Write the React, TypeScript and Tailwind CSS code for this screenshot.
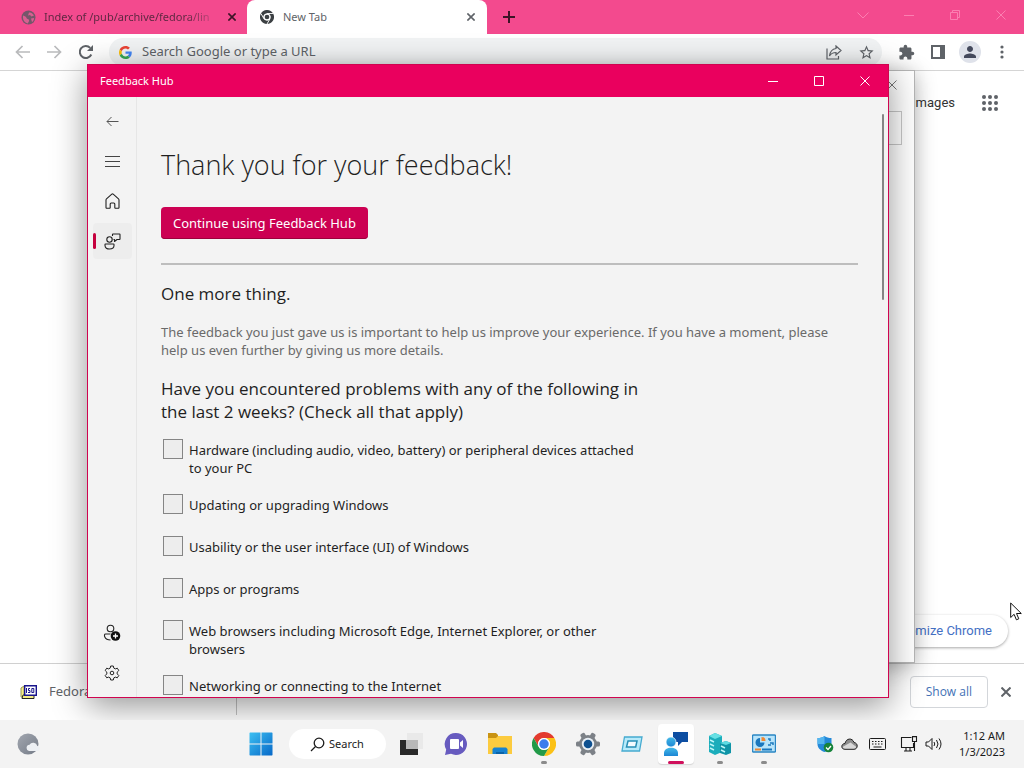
import type { ReactNode } from "react";
import { MdExtension, MdPerson, MdStarBorder } from "react-icons/md";

const problems = [
  "Hardware (including audio, video, battery) or peripheral devices attached to your PC",
  "Updating or upgrading Windows",
  "Usability or the user interface (UI) of Windows",
  "Apps or programs",
  "Web browsers including Microsoft Edge, Internet Explorer, or other browsers",
  "Networking or connecting to the Internet",
];

function Cross({ size = 10, width = 1 }: { size?: number; width?: number }) {
  return (
    <svg width={size} height={size} viewBox="0 0 10 10" fill="none" stroke="currentColor" strokeWidth={width}>
      <path d="M.5.5l9 9M9.5.5l-9 9" />
    </svg>
  );
}

function ChromeMark({ mono = false, size }: { mono?: boolean; size: number }) {
  const c = mono ? ["#3c4043", "#3c4043", "#3c4043"] : ["#e33b2e", "#fbc116", "#229a48"];
  return (
    <svg width={size} height={size} viewBox="0 0 48 48">
      <path fill={c[0]} d="M24 12h20.8A24 24 0 0 0 3.2 12l10.4 18A12 12 0 0 1 24 12z" />
      <path fill={c[1]} d="M34.4 30L24 48a24 24 0 0 0 20.8-36H24a12 12 0 0 1 10.4 18z" />
      <path fill={c[2]} d="M13.6 30L3.2 12A24 24 0 0 0 24 48l10.4-18a12 12 0 0 1-20.8 0z" />
      {mono && (
        <path d="M24 12h21M13.6 30L3.2 12M34.4 30L24 48" stroke="#fff" strokeWidth="3" />
      )}
      <circle cx="24" cy="24" r="12" fill="#fff" />
      <circle cx="24" cy="24" r={mono ? 8 : 9.5} fill={mono ? "#3c4043" : "#3b7ded"} />
    </svg>
  );
}

function GoogleG() {
  return (
    <svg width="13" height="13" viewBox="0 0 48 48">
      <path fill="#EA4335" d="M24 9.5c3.54 0 6.71 1.22 9.21 3.6l6.85-6.85C35.9 2.38 30.47 0 24 0 14.62 0 6.51 5.38 2.56 13.22l7.98 6.19C12.43 13.72 17.74 9.5 24 9.5z" />
      <path fill="#4285F4" d="M46.98 24.55c0-1.57-.15-3.09-.38-4.55H24v9.02h12.94c-.58 2.96-2.26 5.48-4.78 7.18l7.73 6c4.51-4.18 7.09-10.36 7.09-17.65z" />
      <path fill="#FBBC05" d="M10.53 28.59A14.5 14.5 0 0 1 9.77 24c0-1.6.27-3.14.76-4.59l-7.98-6.19A23.9 23.9 0 0 0 0 24c0 3.88.92 7.54 2.56 10.78l7.97-6.19z" />
      <path fill="#34A853" d="M24 48c6.48 0 11.93-2.13 15.89-5.81l-7.73-6c-2.15 1.45-4.92 2.3-8.16 2.3-6.26 0-11.57-4.22-13.47-9.91l-7.98 6.19C6.51 42.62 14.62 48 24 48z" />
    </svg>
  );
}

function TabStrip() {
  const caption = "flex h-[30px] w-[46px] items-center justify-center";
  return (
    <div className="flex h-[34px] shrink-0 bg-[#f34a8e]">
      <div className="flex w-[247px] items-center pl-[21px] pr-[5px] text-[#5b2740]">
        <svg width="15" height="15" viewBox="0 0 15 15">
          <circle cx="7.500" cy="7.500" r="7" fill="#75566a" />
          <path d="M2 5.500C4 6 5 6.500 5.500 8s2 .5 2.500 2-1 2-1 3.500C4 13 2 10.500 2 8zM8 2.500c2-.5 4 1 5 3L10.500 6.500 9 5 7 5.500zM10 8.500l3-.5c0 2-1 3.500-2 4z" fill="#d85f91" />
        </svg>
        <span className="ml-2 whitespace-nowrap bg-linear-to-r from-[#5b2740] from-85% to-[#c04478] bg-clip-text text-[11px] text-transparent">
          Index of /pub/archive/fedora/lin
        </span>
        <button aria-label="Close tab" className="ml-auto flex size-5 items-center justify-center text-[#3c1426]">
          <Cross size={8} width={2} />
        </button>
      </div>
      <div className="flex w-[240px] items-center rounded-t-lg bg-white pl-[13px] pr-[6px] text-[#5f6368]">
        <ChromeMark mono size={14} />
        <span className="ml-[9px] text-[11px]">New Tab</span>
        <button aria-label="Close tab" className="ml-auto flex size-5 items-center justify-center">
          <Cross size={8} width={2} />
        </button>
      </div>
      <button aria-label="New tab" className="flex w-[44px] items-center justify-center text-[#3c1426]">
        <svg width="12" height="12" viewBox="0 0 12 12" stroke="currentColor" strokeWidth="2">
          <path d="M6 0v12M0 6h12" />
        </svg>
      </button>
      <div className="ml-auto flex text-[#fb7fb1]">
        <button aria-label="Search tabs" className={caption}>
          <svg width="12" height="7" viewBox="0 0 12 7" fill="none" stroke="currentColor"><path d="M.5.5L6 6l5.500-5.500" /></svg>
        </button>
        <button aria-label="Minimize browser" className={caption}>
          <svg width="10" height="1" viewBox="0 0 10 1"><path d="M0 0h10v1H0z" fill="currentColor" /></svg>
        </button>
        <button aria-label="Restore browser" className={caption}>
          <svg width="10" height="10" viewBox="0 0 10 10" fill="none" stroke="currentColor"><path d="M.5 2.500h7v7h-7zM2.500 2.500v-2h7v7h-2" /></svg>
        </button>
        <button aria-label="Close browser" className={caption}><Cross /></button>
      </div>
    </div>
  );
}

function Toolbar() {
  const slot = "flex h-7 w-8 shrink-0 items-center justify-center";
  return (
    <div className="flex h-[37px] shrink-0 items-center border-b border-[#d5d5d5] bg-white px-[6px] text-[#5f6368]">
      <button aria-label="Back" className={slot + " text-[#b9babc]"}>
        <svg width="15" height="14" viewBox="0 0 15 14" fill="none" stroke="currentColor" strokeWidth="1.700"><path d="M15 7H1.500M7.500 1l-6 6 6 6" /></svg>
      </button>
      <button aria-label="Forward" className={slot + " text-[#b9babc]"}>
        <svg width="15" height="14" viewBox="0 0 15 14" fill="none" stroke="currentColor" strokeWidth="1.700"><path d="M0 7h13.500M7.500 1l6 6-6 6" /></svg>
      </button>
      <button aria-label="Reload" className={slot}>
        <svg width="14" height="14" viewBox="0 0 14 14"><path d="M12.300 9.500A6 6 0 1 1 11.200 2.900" fill="none" stroke="currentColor" strokeWidth="2" /><path d="M14 0v6H8z" fill="currentColor" /></svg>
      </button>
      <div className="ml-[7px] flex h-7 flex-1 items-center rounded-full bg-[#f1f3f4] pl-[10px]">
        <GoogleG />
        <input
          aria-label="Address bar"
          placeholder="Search Google or type a URL"
          className="ml-[10px] min-w-0 flex-1 bg-transparent text-[13px] outline-none placeholder:text-[#5f6368]"
        />
        <button aria-label="Share" className={slot}>
          <svg width="16" height="15" viewBox="0 0 16 15" fill="none" stroke="currentColor" strokeWidth="1.200"><path d="M1 3.500v10.500h11.500v-3M10 1l5 4.500-5 4.500V7.500C7 7.500 5 8.500 3.500 11 4 7 6 4 10 3.500z" /></svg>
        </button>
        <button aria-label="Bookmark" className={slot}><MdStarBorder size={17} /></button>
      </div>
      <button aria-label="Extensions" className={slot + " ml-[8px]"}><MdExtension size={17} /></button>
      <button aria-label="Side panel" className={slot}>
        <svg width="14" height="14" viewBox="0 0 14 14"><path d="M1 1h12v12H1z" fill="none" stroke="currentColor" strokeWidth="2" /><path d="M9 0h5v14H9z" fill="currentColor" /></svg>
      </button>
      <button aria-label="Profile" className={slot}>
        <span className="flex size-[22px] items-center justify-center rounded-full bg-[#dfe2ea] text-[#44495c]"><MdPerson size={18} /></span>
      </button>
      <button aria-label="Menu" className={slot}>
        <svg width="4" height="14" viewBox="0 0 4 14" fill="currentColor"><circle cx="2" cy="2" r="1.600" /><circle cx="2" cy="7" r="1.600" /><circle cx="2" cy="12" r="1.600" /></svg>
      </button>
    </div>
  );
}

function NewTabPage() {
  return (
    <div className="relative flex flex-1 justify-end bg-white font-[Roboto,'Liberation_Sans',sans-serif] text-[13px]">
      <div className="mr-[25px] mt-4 flex h-8 items-center gap-[26px] text-[#333]">
        <a href="#images">Images</a>
        <button aria-label="Google apps">
          <svg width="18" height="18" viewBox="0 0 18 18" fill="#5f6368">
            {[3, 9, 15].map((y) => [3, 9, 15].map((x) => <circle key={x * 20 + y} cx={x} cy={y} r="2" />))}
          </svg>
        </button>
      </div>
      <button className="absolute bottom-4 right-4 h-8 rounded-full bg-white px-4 text-[#4470c4] shadow-[0_1px_3px_rgba(0,0,0,0.35)]">
        Customize Chrome
      </button>
    </div>
  );
}

function Downloads() {
  return (
    <div className="flex h-[57px] shrink-0 items-center border-t border-[#d0d0d0] bg-white text-[12px] text-[#5f6368]">
      <div className="flex h-[46px] w-[237px] items-center border-r border-[#c4c4c4] pl-5">
        <svg width="17" height="16" viewBox="0 0 17 16">
          <path d="M1 4l3-2v11H1z" fill="#f5ed86" stroke="#98945a" />
          <path d="M2 14.500h12V11H3z" fill="#f5ed86" stroke="#222" />
          <path d="M4.700 1.700h11.600v9.600H4.700z" fill="#fff" stroke="#19158c" strokeWidth="1.400" />
          <path d="M6.500 4v5M10 4.500H8.500v2H10v2H8M11.800 4.500h2v4h-2z" fill="none" stroke="#19158c" />
        </svg>
        <span className="ml-3 text-[13px]">Fedora</span>
      </div>
      <button className="ml-auto h-8 rounded border border-[#d3d6da] px-[15px] font-['Open_Sans',sans-serif] text-[12px] font-medium text-[#4371b5]">Show all</button>
      <button aria-label="Close downloads" className="flex w-9 justify-center"><Cross size={10} width={2} /></button>
    </div>
  );
}

function NavButton({ label, active, children }: { label: string; active?: boolean; children: ReactNode }) {
  return (
    <button
      aria-label={label}
      className={"relative flex h-9 w-[39px] items-center justify-center rounded-sm text-[#222] " + (active ? "bg-[#ededed]" : "")}
    >
      {active && <span className="absolute left-0 h-4 w-[3px] rounded-full bg-[#c5003e]" />}
      {children}
    </button>
  );
}

function Sidebar() {
  return (
    <nav className="flex w-[49px] shrink-0 flex-col items-center gap-1 border-r border-[#e6e6e6] pb-[6px] pt-[6px]">
      <NavButton label="Back">
        <svg width="13" height="11" viewBox="0 0 13 11" fill="none" stroke="#555"><path d="M12.500 5.500H1M5.500 1L1 5.500 5.500 10" /></svg>
      </NavButton>
      <NavButton label="Navigation">
        <svg width="15" height="11" viewBox="0 0 15 11" stroke="#444"><path d="M0 .5h15M0 5.500h15M0 10.500h15" /></svg>
      </NavButton>
      <NavButton label="Home">
        <svg width="15" height="16" viewBox="0 0 15 16" fill="none" stroke="currentColor" strokeWidth="1.100" strokeLinejoin="round"><path d="M1 7Q1 6.300 1.500 5.800L6.800 1.200Q7.500.6 8.200 1.200L13.500 5.800Q14 6.300 14 7v7.500a.7.7 0 0 1-.7.7H10.500a.7.7 0 0 1-.7-.7V11a1 1 0 0 0-1-1H6.200a1 1 0 0 0-1 1v3.500a.7.7 0 0 1-.7.7H1.700a.7.7 0 0 1-.7-.7z" /></svg>
      </NavButton>
      <NavButton label="Feedback" active>
        <svg width="17" height="17" viewBox="0 0 17 17" fill="none" stroke="currentColor" strokeWidth="1.100" strokeLinejoin="round">
          <path d="M8.500 3V1.500Q8.500 1 9 1h6.500q.5 0 .5.500v4.500q0 .5-.5.500H13l-2.500 2V6.500H9.500" /><circle cx="5.500" cy="6.500" r="2.700" /><path d="M1.500 11h8q.5 0 .5.500v1c0 2.500-2 3.500-4.500 3.500S1 15 1 12.500v-1q0-.5.5-.5z" />
        </svg>
      </NavButton>
      <div className="flex-1" />
      <NavButton label="Add account">
        <svg width="18" height="18" viewBox="0 0 18 18" fill="none" stroke="currentColor" strokeWidth="1.100">
          <circle cx="7.500" cy="4.500" r="3.300" /><path d="M7.500 10H2.500c-2 0-1.500 6 5 6" /><circle cx="12.500" cy="12" r="4.800" fill="#111" stroke="none" /><path d="M12.500 9.500v5M10 12h5" stroke="#fff" strokeWidth="1.300" />
        </svg>
      </NavButton>
      <NavButton label="Settings">
        <svg width="16" height="16" viewBox="0 0 16 16" fill="none" stroke="currentColor" strokeLinejoin="round">
          <path d="M6.700 1h2.600l.5 2.100 1.500.8 2-.7 1.500 2.300-1.600 1.600v1.800l1.600 1.600-1.500 2.300-2-.7-1.500.8-.5 2.100H6.700l-.5-2.100-1.500-.8-2 .7-1.500-2.300 1.600-1.600V7.100L1.200 5.500l1.500-2.300 2 .7 1.500-.8z" /><circle cx="8" cy="8" r="1.800" />
        </svg>
      </NavButton>
    </nav>
  );
}

function FeedbackHub() {
  const caption = "flex h-8 w-[46px] items-center justify-center";
  return (
    <section className="absolute bottom-[70px] left-[87px] right-[135px] top-16 flex flex-col border border-[#d0044f] bg-[#f3f3f3] text-[#1f1f1f] shadow-[0_8px_32px_rgba(0,0,0,0.42)]">
      <header className="flex h-8 shrink-0 items-center bg-[#ea005e] pl-3 text-[11px] text-white">
        Feedback Hub
        <div className="ml-auto flex">
          <button aria-label="Minimize" className={caption}>
            <svg width="10" height="1" viewBox="0 0 10 1"><path d="M0 0h10v1H0z" fill="currentColor" /></svg>
          </button>
          <button aria-label="Maximize" className={caption}>
            <svg width="10" height="10" viewBox="0 0 10 10" fill="none" stroke="currentColor"><path d="M.5.5h9v9h-9z" /></svg>
          </button>
          <button aria-label="Close" className={caption}><Cross /></button>
        </div>
      </header>
      <div className="flex min-h-0 flex-1">
        <Sidebar />
        <main className="min-w-0 flex-1 overflow-hidden pl-6 text-[13px] leading-[18px]">
          <h1 className="mt-12 font-['Open_Sans',sans-serif] text-[27px] font-light leading-10">Thank you for your feedback!</h1>
          <button className="mt-[22px] h-8 rounded bg-[#cc0052] px-3 text-white shadow-[inset_0_-1px_0_#9c003c]">
            Continue using Feedback Hub
          </button>
          <hr className="mt-6 border-t-2 border-[#bdbdbd]" />
          <h2 className="mt-4 font-['Open_Sans',sans-serif] text-[17px] leading-[26px]">One more thing.</h2>
          <p className="mt-4 text-[#6a6a6a]">
            The feedback you just gave us is important to help us improve your experience. If you have a moment, please help us even further by giving us more details.
          </p>
          <fieldset className="mt-[18px]">
            <legend className="max-w-[500px] font-['Open_Sans',sans-serif] text-[17px] leading-[23px]">
              Have you encountered problems with any of the following in the last 2 weeks? (Check all that apply)
            </legend>
            <div className="mt-4 flex max-w-[482px] flex-col gap-[15px] pl-[2px]">
              {problems.map((p) => (
                <label key={p} className="flex min-h-[27px] items-start gap-[6px]">
                  <input type="checkbox" className="size-5 shrink-0 appearance-none border border-[#858585] bg-[#ededed] checked:bg-[#cc0052]" />
                  <span className="pb-[2px] pt-[2px]">{p}</span>
                </label>
              ))}
            </div>
          </fieldset>
        </main>
        <div className="flex w-[30px] shrink-0 justify-end pr-1 pt-[17px]">
          <div className="h-[186px] w-[2px] rounded-full bg-[#858585]" />
        </div>
      </div>
    </section>
  );
}

function DialogBehind() {
  return (
    <section className="absolute bottom-[105px] left-[140px] right-[109px] top-[70px] border border-[#b5b5b5] bg-white shadow-[0_4px_20px_rgba(0,0,0,0.3)]">
      <div className="flex h-7 items-center justify-end pr-[17px] text-[#777]">
        <button aria-label="Close dialog"><Cross /></button>
      </div>
      <div className="mr-3 mt-3 h-[34px] border border-[#c8c8c8]" />
    </section>
  );
}

function WindowsIcon() {
  return (
    <svg width="24" height="24" viewBox="0 0 24 24">
      <defs><linearGradient id="win" x1="0" y1="0" x2="1" y2="1"><stop stopColor="#3cc0f2" /><stop offset="1" stopColor="#0768c8" /></linearGradient></defs>
      <path fill="url(#win)" d="M1 .5h10.500V11.500H.5V1zM12.500.5H23l.5.5v10.500h-11zM.5 12.500h11v11H1l-.5-.5zM12.500 12.500h11V23l-.5.5H12.500z" />
    </svg>
  );
}

function TaskButton({ label, state, children }: { label: string; state?: "open" | "active"; children: ReactNode }) {
  return (
    <button aria-label={label} className="flex h-12 w-11 items-center justify-center">
      <span className={"relative flex h-10 w-9 items-center justify-center rounded " + (state === "active" ? "bg-white shadow-[0_1px_1px_rgba(0,0,0,0.12)]" : "")}>
        {children}
        {state === "active" && <span className="absolute bottom-0 h-[3px] w-4 rounded-full bg-[#d0105c]" />}
        {state === "open" && <span className="absolute bottom-0 h-[3px] w-[6px] rounded-full bg-[#8b8b8b]" />}
      </span>
    </button>
  );
}

function Taskbar() {
  return (
    <footer className="relative z-10 grid h-12 shrink-0 grid-cols-[1fr_auto_1fr] items-center bg-[#f3f3f3] text-[12px] text-[#1b1b1b]">
      <button aria-label="Weather" className="ml-4 w-6">
        <svg width="24" height="24" viewBox="0 0 24 24">
          <defs><linearGradient id="moon" x1="0" y1="0" x2="1" y2="1"><stop stopColor="#a2a7b0" /><stop offset="1" stopColor="#747b87" /></linearGradient></defs>
          <circle cx="12" cy="12" r="10.500" fill="url(#moon)" />
          <path d="M13 19a3.200 3.200 0 0 1 .5-6.300 4.300 4.300 0 0 1 7.800 1.300c3.500 0 3.500 5 0 5z" fill="#eceff3" />
        </svg>
      </button>
      <div className="flex items-center">
        <TaskButton label="Start"><WindowsIcon /></TaskButton>
        <button className="ml-[6px] mr-1 flex h-[30px] w-[97px] items-center justify-center gap-1 rounded-full bg-white text-[11px]">
          <svg width="15" height="15" viewBox="0 0 15 15" fill="none" stroke="currentColor" strokeWidth="1.300"><circle cx="9" cy="6" r="4.800" /><path d="M5.500 9.500L1 14" /></svg>
          Search
        </button>
        <TaskButton label="Task view">
          <svg width="24" height="24" viewBox="0 0 24 24"><path fill="#e9e9e9" d="M7 1h16v16H7z" /><path fill="#292929" d="M0 8h18v15H0z" /><path fill="#b8b8b8" d="M6 8h12v9H6z" /></svg>
        </TaskButton>
        <TaskButton label="Chat">
          <svg width="24" height="24" viewBox="0 0 24 24"><path d="M12 1a11 11 0 1 1-5 20.800L1 23l1.200-5.500A11 11 0 0 1 12 1z" fill="#675bbf" /><rect x="6" y="7" width="9" height="10" rx="1" fill="#fff" /><path d="M16 10.500L19 8v8l-3-2.500z" fill="#fff" /></svg>
        </TaskButton>
        <TaskButton label="File Explorer">
          <svg width="24" height="24" viewBox="0 0 24 24"><path d="M0 1h8l2 2v5H0z" fill="#c99313" /><path d="M0 6h8l2-2h14v18H0z" fill="#fccb3f" /><path d="M4.500 22v-5l1.500-1.500h12L19.500 17v5z" fill="#1782d0" /><path d="M8 20h8v2H8z" fill="#0b63a8" /></svg>
        </TaskButton>
        <TaskButton label="Google Chrome" state="open"><ChromeMark size={24} /></TaskButton>
        <TaskButton label="Settings app">
          <svg width="24" height="24" viewBox="0 0 24 24">
            <g fill="#7c8187"><circle cx="12" cy="12" r="9" />
              {[0, 60, 120].map((a) => <rect key={a} x="9.500" y="0" width="5" height="24" rx="1.500" transform={`rotate(${a + 30} 12 12)`} />)}
            </g>
            <circle cx="12" cy="12" r="6.200" fill="#e8eef4" /><circle cx="12" cy="12" r="4.300" fill="#0d5090" />
          </svg>
        </TaskButton>
        <TaskButton label="Run">
          <svg width="22" height="16" viewBox="0 0 22 16" fill="none"><path d="M3.500 1h17.500l-2.500 14H1z" fill="#b7eafa" stroke="#45abd0" strokeWidth="1.300" /><path d="M7 5h9l-1.300 6H5.500z" fill="#f3fbff" stroke="#278fb6" strokeWidth="1.500" /></svg>
        </TaskButton>
        <TaskButton label="Feedback Hub" state="active">
          <svg width="24" height="26" viewBox="0 0 24 26">
            <defs><linearGradient id="person" x1="0" y1="0" x2="0" y2="1"><stop stopColor="#43b9e8" /><stop offset="1" stopColor="#1c86d4" /></linearGradient></defs>
            <path d="M9 1h15v10h-6l-4 4v-4H9z" fill="#0d4ea2" /><circle cx="7" cy="11" r="5" fill="url(#person)" stroke="#fff" strokeWidth=".7" /><path d="M0 25v-3c0-7 14-7 14 0v3z" fill="url(#person)" />
          </svg>
        </TaskButton>
        <TaskButton label="Registry" state="open">
          <svg width="24" height="24" viewBox="0 0 24 24">
            <path d="M1 4l6-3 7 3v16l-7 3-6-3z" fill="#1badbb" /><path d="M1 4l6-3 7 3-7 3z" fill="#67e0e4" /><path d="M12 11l6-2 5 2v10l-5 2-6-2z" fill="#0f94a7" /><path d="M12 11l6-2 5 2-5 2z" fill="#5edce3" /><path d="M2 8l4 2M2 12l4 2M2 16l4 2M13 14l4 2M13 18l4 2" stroke="#bdf6f8" strokeWidth="1.500" />
          </svg>
        </TaskButton>
        <TaskButton label="Control Panel" state="open">
          <svg width="24" height="20" viewBox="0 0 24 20"><rect x=".5" y="1" width="23" height="17" rx="1" fill="#b8e4fa" stroke="#2a86c4" strokeWidth="1.400" /><path d="M8 4a4.500 4.500 0 1 0 4.500 4.500H8z" fill="#1a77bd" /><path d="M9.500 3v4h4a4 4 0 0 0-4-4z" fill="#ef8732" /><path d="M16 5h2v2M18 9h3v2M16 11h3" stroke="#1e7abf" strokeWidth="1.500" fill="none" /><path d="M3 15.500h6" stroke="#ef8732" strokeWidth="2" /><path d="M10 15.500h10" stroke="#1a77bd" strokeWidth="2" /></svg>
        </TaskButton>
      </div>
      <div className="flex items-center justify-end pr-[19px]">
        <div className="flex items-center">
          <svg width="17" height="17" viewBox="0 0 17 17"><path d="M7.500 0c2 1.500 4 2 7 2v6c0 4-3 6.500-7 8C3.500 14.500.5 12 .5 8V2c3 0 5-.5 7-2z" fill="#2489d8" /><path d="M7.500 0v8h-7V2c3 0 5-.5 7-2z" fill="#54b6ef" /><circle cx="11.500" cy="11.500" r="4.800" fill="#16833a" /><path d="M9 11.500l2 2 3-3.500" stroke="#fff" strokeWidth="1.300" fill="none" /></svg>
          <svg className="ml-[7px]" width="17" height="12" viewBox="0 0 17 12"><path d="M4 11.300C-.5 11.300 0 5.500 4 5.500 5 0 11.500-.5 13 4.500c4.500.5 4 6.800 0 6.800z" fill="#8d8d8d" /><path d="M1.500 9l8-4.500 6 4.500-2 2H3z" fill="#d8d8d8" /><path d="M4 11.300C-.5 11.300 0 5.500 4 5.500 5 0 11.500-.5 13 4.500c4.500.5 4 6.800 0 6.800z" fill="none" stroke="#222" /></svg>
          <svg className="ml-[11px]" width="17" height="12" viewBox="0 0 17 12" fill="none" stroke="currentColor"><rect x=".5" y=".5" width="16" height="11" rx="1" /><path d="M3 3.500h11M3 6h11" strokeDasharray="1.500 1.500" /><path d="M4.500 9h8" /></svg>
          <svg className="ml-[14px]" width="18" height="16" viewBox="0 0 18 16" fill="none" stroke="currentColor" strokeWidth="1.100"><path d="M11.500 1.500H1.500v10h12V7M6 11.500v3M10 11.500v3M4 15h8" /><path d="M12.500.6h4v4.900h-4zM14.500 5.500V15" /></svg>
          <svg className="ml-[7px]" width="17" height="14" viewBox="0 0 17 14" fill="none" stroke="currentColor"><path d="M1 5h2.500L7 1.500v11L3.500 9H1zM9 5q1.500 2 0 4M11.500 3q3 4 0 8M14 1.500q4 5.500 0 11" /></svg>
        </div>
        <div className="ml-[17px] text-right text-[11px] leading-4">
          <div>1:12 AM</div>
          <div>1/3/2023</div>
        </div>
      </div>
    </footer>
  );
}

export default function App() {
  return (
    <div className="relative flex h-screen flex-col overflow-hidden bg-white font-['Noto_Sans','Open_Sans',sans-serif]">
      <TabStrip />
      <Toolbar />
      <NewTabPage />
      <Downloads />
      <DialogBehind />
      <FeedbackHub />
      <Taskbar />
      <svg className="absolute right-[2px] top-[602px]" width="12" height="19" viewBox="0 0 12 19">
        <path d="M.7 1v14.500l3.400-3.200 2.300 5.500 2.400-1-2.300-5.300h4.800z" fill="#fff" stroke="#111" />
      </svg>
    </div>
  );
}
